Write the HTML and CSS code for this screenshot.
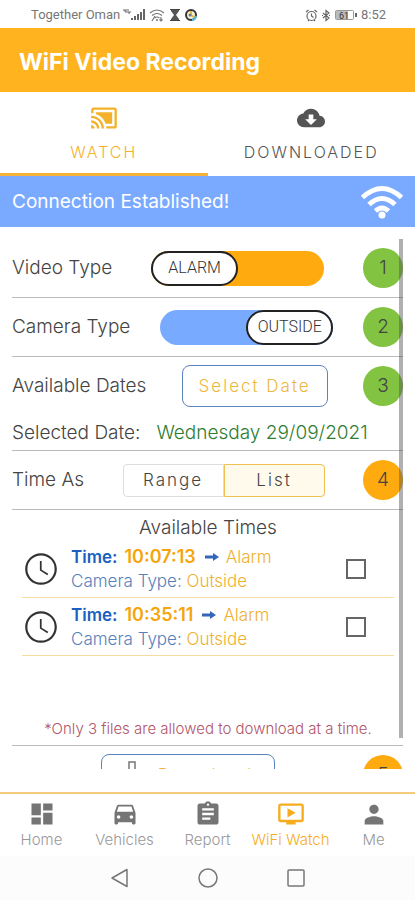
FILE: index.html
```html
<!DOCTYPE html>
<html lang="en">
<head>
<meta charset="utf-8">
<meta name="viewport" content="width=device-width, initial-scale=1">
<title>WiFi Video Recording</title>
<link rel="stylesheet" href="styles.css">
</head>
<body>
<div class="app">
  <div class="status">
    <div class="status-group">
      <span>Together Oman</span>
      <svg width="23" height="14" viewBox="0 0 23 14"><g fill="none" stroke="#666" stroke-width="1"><path d="M1 1v2h2M3 1v4M5 1v4h2v-2"/></g><g fill="#666"><path d="M8 10h2v2H8zM11 8h2v4h-2zM14 6h2v6h-2zM17 4h2v8h-2zM20 1h2v11h-2z"/></g></svg>
      <svg width="17" height="14" viewBox="0 0 17 14"><g fill="none" stroke="#777" stroke-width="1.2"><path d="M1 5q7-6 14 0M3 7.500q5-4 10 0M5.500 10q2.500-2 5 0"/><path d="M3 13l3-5M12 9v4m-1.500-1.500L12 13l1.500-1.500"/></g><circle cx="8" cy="12" r="1" fill="#777"/></svg>
      <svg width="12" height="14" viewBox="0 0 12 14"><path d="M2 1h8v2L7 7l3 4v2H2v-2l3-4-3-4z" fill="#555"/><path d="M1 1.500h10M1 12.500h10" stroke="#444"/></svg>
      <svg width="14" height="14" viewBox="0 0 14 14"><circle cx="7" cy="7" r="5" fill="#f5efd8" stroke="#333" stroke-width="2"/><path d="M7 3v4l4 3" stroke="#e5b93c" stroke-width="2" fill="none"/><path d="M8 12a5 5 0 0 0 4-4" stroke="#53b7d8" stroke-width="2" fill="none"/><circle cx="6" cy="7" r="1.500" fill="#6b7788"/></svg>
    </div>
    <div class="status-group">
      <svg width="13" height="13" viewBox="0 0 13 13"><g fill="none" stroke="#666" stroke-width="1.200"><circle cx="6.500" cy="7" r="4.500"/><path d="M1 3l2.500-2M12 3L9.500 1M6.500 4.500V7l2 1.500M3 12l1-1M10 12l-1-1"/></g></svg>
      <svg width="10" height="13" viewBox="0 0 10 13"><path d="M2 4l6 5-3 2.500v-10L8 4 2 9M1 6.500h1M8 6.500h1" fill="none" stroke="#666" stroke-width="1.200"/></svg>
      <svg width="24" height="12" viewBox="0 0 24 12"><rect x="1.500" y="1.500" width="18" height="9" rx="1" fill="#fff" stroke="#999"/><path d="M2 2h12v8H2z" fill="#bbb"/><path d="M21 4h2v4h-2z" fill="#666"/><text x="5" y="9.500" class="battery">61</text></svg>
      <span>8:52</span>
    </div>
  </div>

  <header class="header"><h1>WiFi Video Recording</h1></header>

  <nav class="tabs" aria-label="Recordings">
    <a href="#watch" class="tab tab-active">
      <svg width="28" height="28" viewBox="0 0 24 24"><path fill="currentColor" d="M1 18v3h3c0-1.660-1.340-3-3-3zm0-4v2c2.760 0 5 2.240 5 5h2c0-3.870-3.130-7-7-7zm18-7H5v1.630c3.960 1.280 7.090 4.410 8.370 8.370H19V7zM1 10v2c4.970 0 9 4.030 9 9h2c0-6.080-4.930-11-11-11zm20-7H3c-1.100 0-2 .9-2 2v3h2V5h18v14h-7v2h7c1.100 0 2-.9 2-2V5c0-1.100-.9-2-2-2z"/></svg>
      <span>WATCH</span>
    </a>
    <a href="#downloaded" class="tab">
      <svg width="28" height="28" viewBox="0 0 24 24"><path fill="currentColor" d="M19.350 10.040C18.670 6.590 15.640 4 12 4 9.110 4 6.600 5.640 5.350 8.040 2.340 8.360 0 10.910 0 14c0 3.310 2.690 6 6 6h13c2.760 0 5-2.240 5-5 0-2.640-2.050-4.780-4.650-4.960zM17 13l-5 5-5-5h3V9h4v4h3z"/></svg>
      <span>DOWNLOADED</span>
    </a>
  </nav>

  <div class="banner">
    <span>Connection Established!</span>
    <svg width="44" height="36" viewBox="0 0 44 36"><g fill="none" stroke="#fff" stroke-width="5"><path d="M2.500 13.500Q22-4.500 41.500 13.500"/><path d="M9 20.500Q22 8.500 35 20.500"/><path d="M15.500 27Q22 21 28.500 27"/></g><circle cx="22" cy="31" r="3.500" fill="#fff"/></svg>
  </div>

  <main class="content">
    <div class="form">
      <div class="row">
        <span id="video-label">Video Type</span>
        <button class="switch switch-orange" role="switch" aria-checked="false" aria-labelledby="video-label"><span class="knob">ALARM</span></button>
        <span class="step">1</span>
      </div>
      <div class="row">
        <span id="camera-label">Camera Type</span>
        <button class="switch switch-blue" role="switch" aria-checked="true" aria-labelledby="camera-label"><span class="knob">OUTSIDE</span></button>
        <span class="step">2</span>
      </div>
      <div class="row row-open">
        <span>Available Dates</span>
        <button class="outline date-button">Select Date</button>
        <span class="step">3</span>
      </div>
      <div class="selected"><span>Selected Date:</span><span class="date">Wednesday 29/09/2021</span></div>
      <div class="row">
        <span>Time As</span>
        <div class="segments" role="radiogroup" aria-label="Time As">
          <label class="segment"><input type="radio" name="mode">Range</label>
          <label class="segment"><input type="radio" name="mode" checked>List</label>
        </div>
        <span class="step step-pending">4</span>
      </div>

      <section class="times">
        <h2>Available Times</h2>
        <ul>
          <li>
            <svg class="clock" width="38" height="38" viewBox="0 0 24 24"><path fill="currentColor" d="M11.990 2C6.470 2 2 6.480 2 12s4.470 10 9.990 10C17.520 22 22 17.520 22 12S17.520 2 11.990 2zM12 20.600a8.600 8.600 0 1 1 0-17.200 8.600 8.600 0 0 1 0 17.200zM12.400 7h-1.100v6l4.700 3 .6-1-4.200-2.600z"/></svg>
            <label class="details" for="t1">
              <span class="line"><b>Time:</b><b class="amber">10:07:13</b><svg class="arrow" width="14" height="8" viewBox="0 0 14 8"><path fill="currentColor" d="M0 2.500h8V0l6 4-6 4V5.500H0z"/></svg><span class="amber">Alarm</span></span>
              <span class="line camera">Camera Type: <span class="amber">Outside</span></span>
            </label>
            <input class="check" type="checkbox" id="t1">
          </li>
          <li>
            <svg class="clock" width="38" height="38" viewBox="0 0 24 24"><path fill="currentColor" d="M11.990 2C6.470 2 2 6.480 2 12s4.470 10 9.990 10C17.520 22 22 17.520 22 12S17.520 2 11.990 2zM12 20.600a8.600 8.600 0 1 1 0-17.200 8.600 8.600 0 0 1 0 17.200zM12.400 7h-1.100v6l4.700 3 .6-1-4.200-2.600z"/></svg>
            <label class="details" for="t2">
              <span class="line"><b>Time:</b><b class="amber">10:35:11</b><svg class="arrow" width="14" height="8" viewBox="0 0 14 8"><path fill="currentColor" d="M0 2.500h8V0l6 4-6 4V5.500H0z"/></svg><span class="amber">Alarm</span></span>
              <span class="line camera">Camera Type: <span class="amber">Outside</span></span>
            </label>
            <input class="check" type="checkbox" id="t2">
          </li>
        </ul>
        <p class="note">*Only 3 files are allowed to download at a time.</p>
      </section>

      <div class="row row-open">
        <span></span>
        <button class="outline download-button"><svg width="20" height="28" viewBox="0 0 20 28"><path d="M7 1h6v13h5l-8 8-8-8h5zM2 26h16" fill="none" stroke="#777" stroke-width="1.500"/></svg>Download</button>
        <span class="step step-pending">5</span>
      </div>
    </div>
    <div class="scrollbar"></div>
  </main>

  <nav class="bottom" aria-label="Main">
    <a href="#home"><svg width="28" height="28" viewBox="0 0 24 24"><path fill="currentColor" d="M3 13h8V3H3v10zm0 8h8v-6H3v6zm10 0h8V11h-8v10zm0-18v6h8V3h-8z"/></svg>Home</a>
    <a href="#vehicles"><svg width="28" height="28" viewBox="0 0 24 24"><path fill="currentColor" d="M18.920 5.010C18.720 4.420 18.160 4 17.500 4h-11c-.66 0-1.210.42-1.420 1.010L3 11v9c0 .55.450 1 1 1h1c.55 0 1-.45 1-1v-1h12v1c0 .55.450 1 1 1h1c.55 0 1-.45 1-1v-9l-2.080-5.990zM6.500 16c-.83 0-1.500-.67-1.500-1.500S5.670 13 6.500 13s1.500.67 1.500 1.500S7.330 16 6.500 16zm11 0c-.83 0-1.500-.67-1.500-1.500s.67-1.500 1.500-1.500 1.500.67 1.500 1.500-.67 1.500-1.500 1.500zM5 10l1.500-4.500h11L19 10H5z"/></svg>Vehicles</a>
    <a href="#report"><svg width="28" height="28" viewBox="0 0 24 24"><path fill="currentColor" d="M19 3h-4.180C14.400 1.840 13.300 1 12 1c-1.300 0-2.400.84-2.820 2H5c-1.100 0-2 .9-2 2v14c0 1.100.9 2 2 2h14c1.100 0 2-.9 2-2V5c0-1.100-.9-2-2-2zm-7 0c.55 0 1 .45 1 1s-.45 1-1 1-1-.45-1-1 .45-1 1-1zm2 14H7v-2h7v2zm3-4H7v-2h10v2zm0-4H7V7h10v2z"/></svg>Report</a>
    <a href="#wifi" class="current"><svg width="28" height="28" viewBox="0 0 24 24"><path fill="currentColor" d="M21 3H3c-1.110 0-2 .89-2 2v12c0 1.100.89 2 2 2h5v2h8v-2h5c1.100 0 1.990-.9 1.990-2L23 5c0-1.110-.9-2-2-2zm0 14H3V5h18v12zm-5-6l-7 4V7z"/></svg>WiFi Watch</a>
    <a href="#me"><svg width="28" height="28" viewBox="0 0 24 24"><path fill="currentColor" d="M12 12c2.210 0 4-1.790 4-4s-1.790-4-4-4-4 1.790-4 4 1.790 4 4 4zm0 2c-2.670 0-8 1.340-8 4v3h16v-3c0-2.660-5.330-4-8-4z"/></svg>Me</a>
  </nav>

  <div class="system">
    <button aria-label="Back"><svg width="20" height="20" viewBox="0 0 20 20"><path d="M17 1.500v17L2 10z" fill="none" stroke="currentColor" stroke-width="1.500" stroke-linejoin="round"/></svg></button>
    <button aria-label="Home"><svg width="20" height="20" viewBox="0 0 20 20"><circle cx="10" cy="10" r="9" fill="none" stroke="currentColor" stroke-width="1.500"/></svg></button>
    <button aria-label="Recent apps"><svg width="20" height="20" viewBox="0 0 20 20"><rect x="2" y="2" width="16" height="16" rx="1" fill="none" stroke="currentColor" stroke-width="1.500"/></svg></button>
  </div>
</div>
</body>
</html>
```
FILE: styles.css
```css
* { box-sizing: border-box; }
body { margin: 0; background: #fff; color: #444; font: 300 19px/24px Inter, "Liberation Sans", sans-serif; }
h1, h2, p, ul { margin: 0; padding: 0; font-weight: inherit; }
button { padding: 0; border: 0; background: none; color: inherit; font: inherit; }
a { color: inherit; text-decoration: none; }
svg { display: block; flex: none; }

.app { display: flex; flex-direction: column; height: 100vh; overflow: hidden; }

.status { flex: none; display: flex; justify-content: space-between; align-items: center; height: 28px; padding: 2px 29px 0 31px; color: #777; font: 13px/16px Roboto, sans-serif; }
.status-group { display: flex; align-items: center; gap: 3px; }
.battery { font: 9px Roboto, sans-serif; fill: #333; }

.header { flex: none; display: flex; align-items: center; height: 64px; padding: 4px 19px 0; background: #ffb31e; color: #fff; }
.header h1 { font-size: 23px; line-height: 28px; font-weight: 700; }

.tabs { flex: none; display: grid; grid-template-columns: 1fr 1fr; height: 84px; }
.tab { display: flex; flex-direction: column; align-items: center; gap: 8px; padding-top: 12px; border-bottom: 3px solid transparent; color: #555; font-size: 16px; line-height: 24px; letter-spacing: 2px; }
.tab-active { border-color: #f5b23a; color: #f3b229; }

.banner { flex: none; display: flex; align-items: center; justify-content: space-between; height: 51px; padding: 0 11px 0 12px; background: #7aaaff; color: #fff; font-weight: 400; }

.content { position: relative; flex: 1; min-height: 0; overflow: hidden; margin: 12px 12px 23px; }
.row { display: flex; align-items: center; justify-content: space-between; height: 59px; border-bottom: 1px solid #bbb; }
.row-open { height: 58px; border-bottom: 0; }
.step { display: grid; place-items: center; width: 40px; height: 40px; border-radius: 50%; background: #82c341; color: #444; }
.step-pending { background: #ffab0f; }

.switch { display: flex; width: 173px; height: 35px; border-radius: 18px; }
.switch-orange { background: #ffab0f; }
.switch-blue { justify-content: flex-end; background: #78aaff; }
.knob { display: grid; place-items: center; width: 87px; height: 35px; border: 2px solid #222; border-radius: 18px; background: #fff; color: #333; font: 300 16px/20px Roboto, sans-serif; }

.outline { border: 1px solid #5b83c0; border-radius: 8px; color: #f0b63c; font-size: 17px; letter-spacing: 2px; }
.date-button { width: 146px; height: 42px; }
.download-button { display: flex; align-items: center; justify-content: center; gap: 16px; width: 174px; height: 42px; }

.selected { display: flex; gap: 16px; height: 36px; padding-top: 6px; border-bottom: 1px solid #bbb; white-space: nowrap; }
.date { color: #2e7d32; }

.segments { display: grid; grid-template-columns: 1fr 1fr; width: 202px; height: 33px; }
.segment { position: relative; display: grid; place-items: center; border: 1px solid #ddd; border-radius: 4px 0 0 4px; font-size: 17px; letter-spacing: 2px; }
.segment:last-child { border-radius: 0 4px 4px 0; }
.segment:has(:checked) { border-color: #edc250; background: #fffaec; }
.segment input { position: absolute; opacity: 0; }

.times { display: flex; flex-direction: column; height: 236px; padding: 6px 9px 0 10px; border-bottom: 1px solid #bbb; }
.times h2 { font-size: 19px; line-height: 24px; text-align: center; }
.times ul { list-style: none; }
.times li { display: flex; align-items: center; height: 58px; border-bottom: 1px solid #f7dc9f; }
.clock { color: #333; }
.details { display: flex; flex-direction: column; flex: 1; margin-left: 11px; color: #1b5fc1; font-size: 17px; white-space: nowrap; }
.details b { font-weight: 600; margin-right: 7px; }
.line { display: flex; align-items: center; height: 24px; white-space: pre; }
.camera { color: #5580bd; }
.arrow { margin: 0 7px 0 2px; color: #3467ba; }
.amber { color: #efb02e; }
b.amber { color: #f5a50a; font-size: 18px; }
.check { appearance: none; width: 20px; height: 20px; margin: 0 28px 0 0; border: 2px solid #666; background: #fff; }
.note { margin: auto 0 4px; color: #b05468; font-size: 15px; line-height: 24px; text-align: center; white-space: nowrap; }
.scrollbar { position: absolute; top: 0; right: 0; width: 4px; height: 499px; background: rgba(80, 80, 80, 0.45); }

.bottom { flex: none; display: grid; grid-template-columns: repeat(5, 1fr); height: 64px; border-top: 2px solid #f4cc7b; color: #999; font-size: 15px; line-height: 20px; }
.bottom a { display: flex; flex-direction: column; align-items: center; gap: 2px; padding-top: 6px; white-space: nowrap; }
.bottom svg { color: #757575; }
.bottom .current, .bottom .current svg { color: #f6ad1d; }

.system { flex: none; display: flex; justify-content: center; align-items: center; gap: 68px; height: 44px; background: #fcfcfc; color: #777; }
```
